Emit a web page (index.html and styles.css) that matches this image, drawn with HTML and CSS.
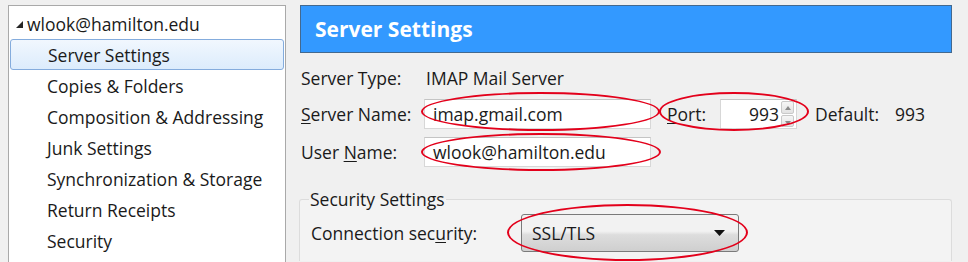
FILE: index.html
```html
<!DOCTYPE html>
<html lang="en">
<head>
  <meta charset="UTF-8" />
  <title>Account Settings - Server Settings</title>
  <link rel="stylesheet" href="styles.css">
</head>
<body>
  <div class="window">
    <aside class="tree">
      <div class="tree-root">
        <svg class="twisty" width="7" height="7" viewBox="0 0 7 7" aria-hidden="true"><path d="M7 0 L7 7 L0 7 Z" fill="#262626"/></svg>
        <span>wlook@hamilton.edu</span>
      </div>
      <div class="tree-item selected">Server Settings</div>
      <div class="tree-item">Copies &amp; Folders</div>
      <div class="tree-item">Composition &amp; Addressing</div>
      <div class="tree-item">Junk Settings</div>
      <div class="tree-item">Synchronization &amp; Storage</div>
      <div class="tree-item">Return Receipts</div>
      <div class="tree-item">Security</div>
    </aside>

    <main class="pane">
      <div class="pane-title">Server Settings</div>

      <div class="form">
        <div class="row row-type">
          <span class="label">Server Type:</span>
          <span class="value">IMAP Mail Server</span>
        </div>
        <div class="row">
          <span class="label"><u>S</u>erver Name:</span>
          <div class="field field-wide">imap.gmail.com</div>
          <span class="port-label"><u>P</u>ort:</span>
          <div class="field field-port">
            <span class="port-value">993</span>
            <span class="spinner">
              <span class="spin spin-up"></span>
              <span class="spin spin-down"></span>
            </span>
          </div>
          <span class="default-label">Default:</span>
          <span class="default-value">993</span>
        </div>
        <div class="row">
          <span class="label">User <u>N</u>ame:</span>
          <div class="field field-wide">wlook@hamilton.edu</div>
        </div>
      </div>

      <fieldset class="group">
        <legend>Security Settings</legend>
        <div class="row row-security">
          <span class="label label-security">Connection sec<u>u</u>rity:</span>
          <div class="select">
            <span>SSL/TLS</span>
            <svg width="11" height="6" viewBox="0 0 11 6" aria-hidden="true"><path d="M0 0 H11 L5.5 6 Z" fill="#111"/></svg>
          </div>
        </div>
      </fieldset>
    </main>

    <!-- red annotation rings drawn over the dialog -->
    <div class="ring ring-server"></div>
    <div class="ring ring-user"></div>
    <div class="ring ring-port"></div>
    <div class="ring ring-security"></div>
  </div>
</body>
</html>
```

FILE: styles.css
```css
/* Base */
*, *::before, *::after {
  box-sizing: border-box;
}
body {
  margin: 0;
  background: #f0f0f0;
  font-family: 'Open Sans', 'Noto Sans', sans-serif;
  font-size: 17.5px;
  color: #1a1a1a;
  overflow: hidden;
}
u {
  text-decoration-thickness: 1px;
  text-underline-offset: 2px;
}
.window {
  position: relative;
  display: flex;
  align-items: flex-start;
  padding: 5px 0 0 8px;
  height: 262px;
  overflow: hidden;
}

/* Left tree (cut off by the bottom of the shot) */
.tree {
  width: 278px;
  height: 257px;
  background: #fff;
  border: 1px solid #a9a9a9;
  border-bottom: none;
  padding-top: 2px;
}
.tree-root {
  display: flex;
  align-items: center;
  height: 31px;
  padding-left: 7px;
}
.twisty {
  margin-right: 4px;
  margin-top: 2px;
}
.tree-item {
  display: flex;
  align-items: center;
  height: 31px;
  padding-left: 38px;
}
.tree-item.selected {
  margin: 0 1px;
  padding-left: 37px;
  border: 1px solid #84acdd;
  border-radius: 3px;
  background: linear-gradient(#f1f7fe, #dcecfc);
}

/* Right pane */
.pane {
  width: 652px;
  margin-left: 14px;
}
.pane-title {
  height: 48px;
  background: #3399ff;
  border: 1px solid #43698f;
  color: #fff;
  font-weight: 700;
  font-size: 21px;
  padding-left: 14px;
  display: flex;
  align-items: center;
}
.form {
  padding-top: 13px;
  display: flex;
  flex-direction: column;
  gap: 8px;
}
.row {
  display: flex;
  align-items: center;
  height: 30px;
}
.row-type {
  height: 24px;
  margin-bottom: 1px;
}
.label {
  width: 124px;
  padding-left: 1px;
  flex-shrink: 0;
}
.value {
  padding-left: 2px;
}
.field {
  height: 30px;
  background: #fff;
  border: 1px solid #d7d7d7;
  border-top-color: #c4c4c4;
  display: flex;
  align-items: center;
}
.field-wide {
  width: 227px;
  padding-left: 8px;
}
.port-label {
  margin-left: 16px;
  width: 53px;
}
.field-port {
  width: 77px;
  justify-content: flex-end;
  padding-right: 2px;
}
.port-value {
  margin-right: 2px;
}
.spinner {
  display: flex;
  flex-direction: column;
  gap: 1px;
  height: 26px;
}
.spin {
  width: 13px;
  flex: 1;
  border: 1px solid #c9c9c9;
  border-radius: 2px;
  background: linear-gradient(#f6f6f6, #e2e2e2);
  position: relative;
}
.spin::after {
  content: "";
  position: absolute;
  left: 3px;
  top: 4px;
  border-left: 3px solid transparent;
  border-right: 3px solid transparent;
}
.spin-up::after {
  border-bottom: 4px solid #8a8a8a;
}
.spin-down::after {
  top: 5px;
  border-top: 4px solid #8a8a8a;
}
.default-label {
  margin-left: 18px;
  width: 80px;
}

/* Security group box (cut off by the bottom of the shot) */
.group {
  margin: 20px 0 0 -1px;
  width: 653px;
  height: 74px;
  border: 1px solid #dcdcdc;
  border-bottom: none;
  border-radius: 3px 3px 0 0;
  background: #f3f3f3;
  padding: 0 0 0 10px;
}
.group legend {
  padding: 0 1px;
  margin-left: -1px;
}
.row-security {
  height: 38px;
  margin-top: 3px;
}
.label-security {
  width: 211px;
}
.select {
  width: 218px;
  height: 38px;
  border: 1px solid #7a7a7a;
  border-radius: 3px;
  background: linear-gradient(#f2f2f2 45%, #dddddd 55%, #cfcfcf);
  display: flex;
  align-items: center;
  justify-content: space-between;
  padding: 0 13px 0 10px;
}

/* Red annotation rings */
.ring {
  position: absolute;
  border: 2px solid #e3001b;
  border-radius: 50%;
}
.ring-server {
  left: 421px;
  top: 92px;
  width: 239px;
  height: 39px;
}
.ring-user {
  left: 421px;
  top: 133px;
  width: 240px;
  height: 38px;
}
.ring-port {
  left: 659px;
  top: 92px;
  width: 150px;
  height: 39px;
}
.ring-security {
  left: 507px;
  top: 204px;
  width: 241px;
  height: 57px;
}
```
